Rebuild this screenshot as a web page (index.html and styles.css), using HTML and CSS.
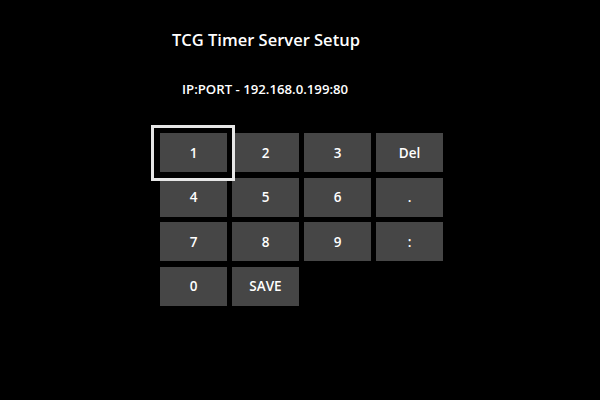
FILE: index.html
```html
<!DOCTYPE html>
<html>
<head>
<meta charset="utf-8">
<link rel="stylesheet" href="styles.css">
</head>
<body>
<div class="screen">
  <h1 class="title">TCG Timer Server Setup</h1>
  <p class="ip">IP:PORT - 192.168.0.199:80</p>
  <div class="keypad">
    <div class="key selected">1</div>
    <div class="key">2</div>
    <div class="key">3</div>
    <div class="key">Del</div>
    <div class="key">4</div>
    <div class="key">5</div>
    <div class="key">6</div>
    <div class="key">.</div>
    <div class="key">7</div>
    <div class="key">8</div>
    <div class="key">9</div>
    <div class="key">:</div>
    <div class="key">0</div>
    <div class="key">SAVE</div>
  </div>
</div>
</body>
</html>
```

FILE: styles.css
```css
html, body {
  margin: 0;
  padding: 0;
  background: #000;
}
.screen {
  width: 600px;
  height: 400px;
  display: flex;
  flex-direction: column;
  font-family: "Open Sans", "DejaVu Sans", sans-serif;
  color: #fff;
}
.title {
  margin: 29px 0 0 172px;
  font-size: 16.5px;
  line-height: 22px;
  font-weight: 600;
}
.ip {
  margin: 29px 0 0 182px;
  font-size: 13.2px;
  line-height: 18px;
  font-weight: 600;
}
.keypad {
  margin: 35px 0 0 160px;
  display: grid;
  grid-template-columns: repeat(4, 67px);
  grid-auto-rows: 39px;
  column-gap: 5px;
  row-gap: 5.5px;
}
.key {
  background: #464646;
  display: flex;
  align-items: center;
  justify-content: center;
  font-size: 13.5px;
  font-weight: 600;
  position: relative;
}
.key.selected::after {
  content: "";
  position: absolute;
  left: -9px;
  top: -8px;
  right: -8px;
  bottom: -9px;
  border: 3px solid #e6e6e6;
  z-index: 1;
}
```
